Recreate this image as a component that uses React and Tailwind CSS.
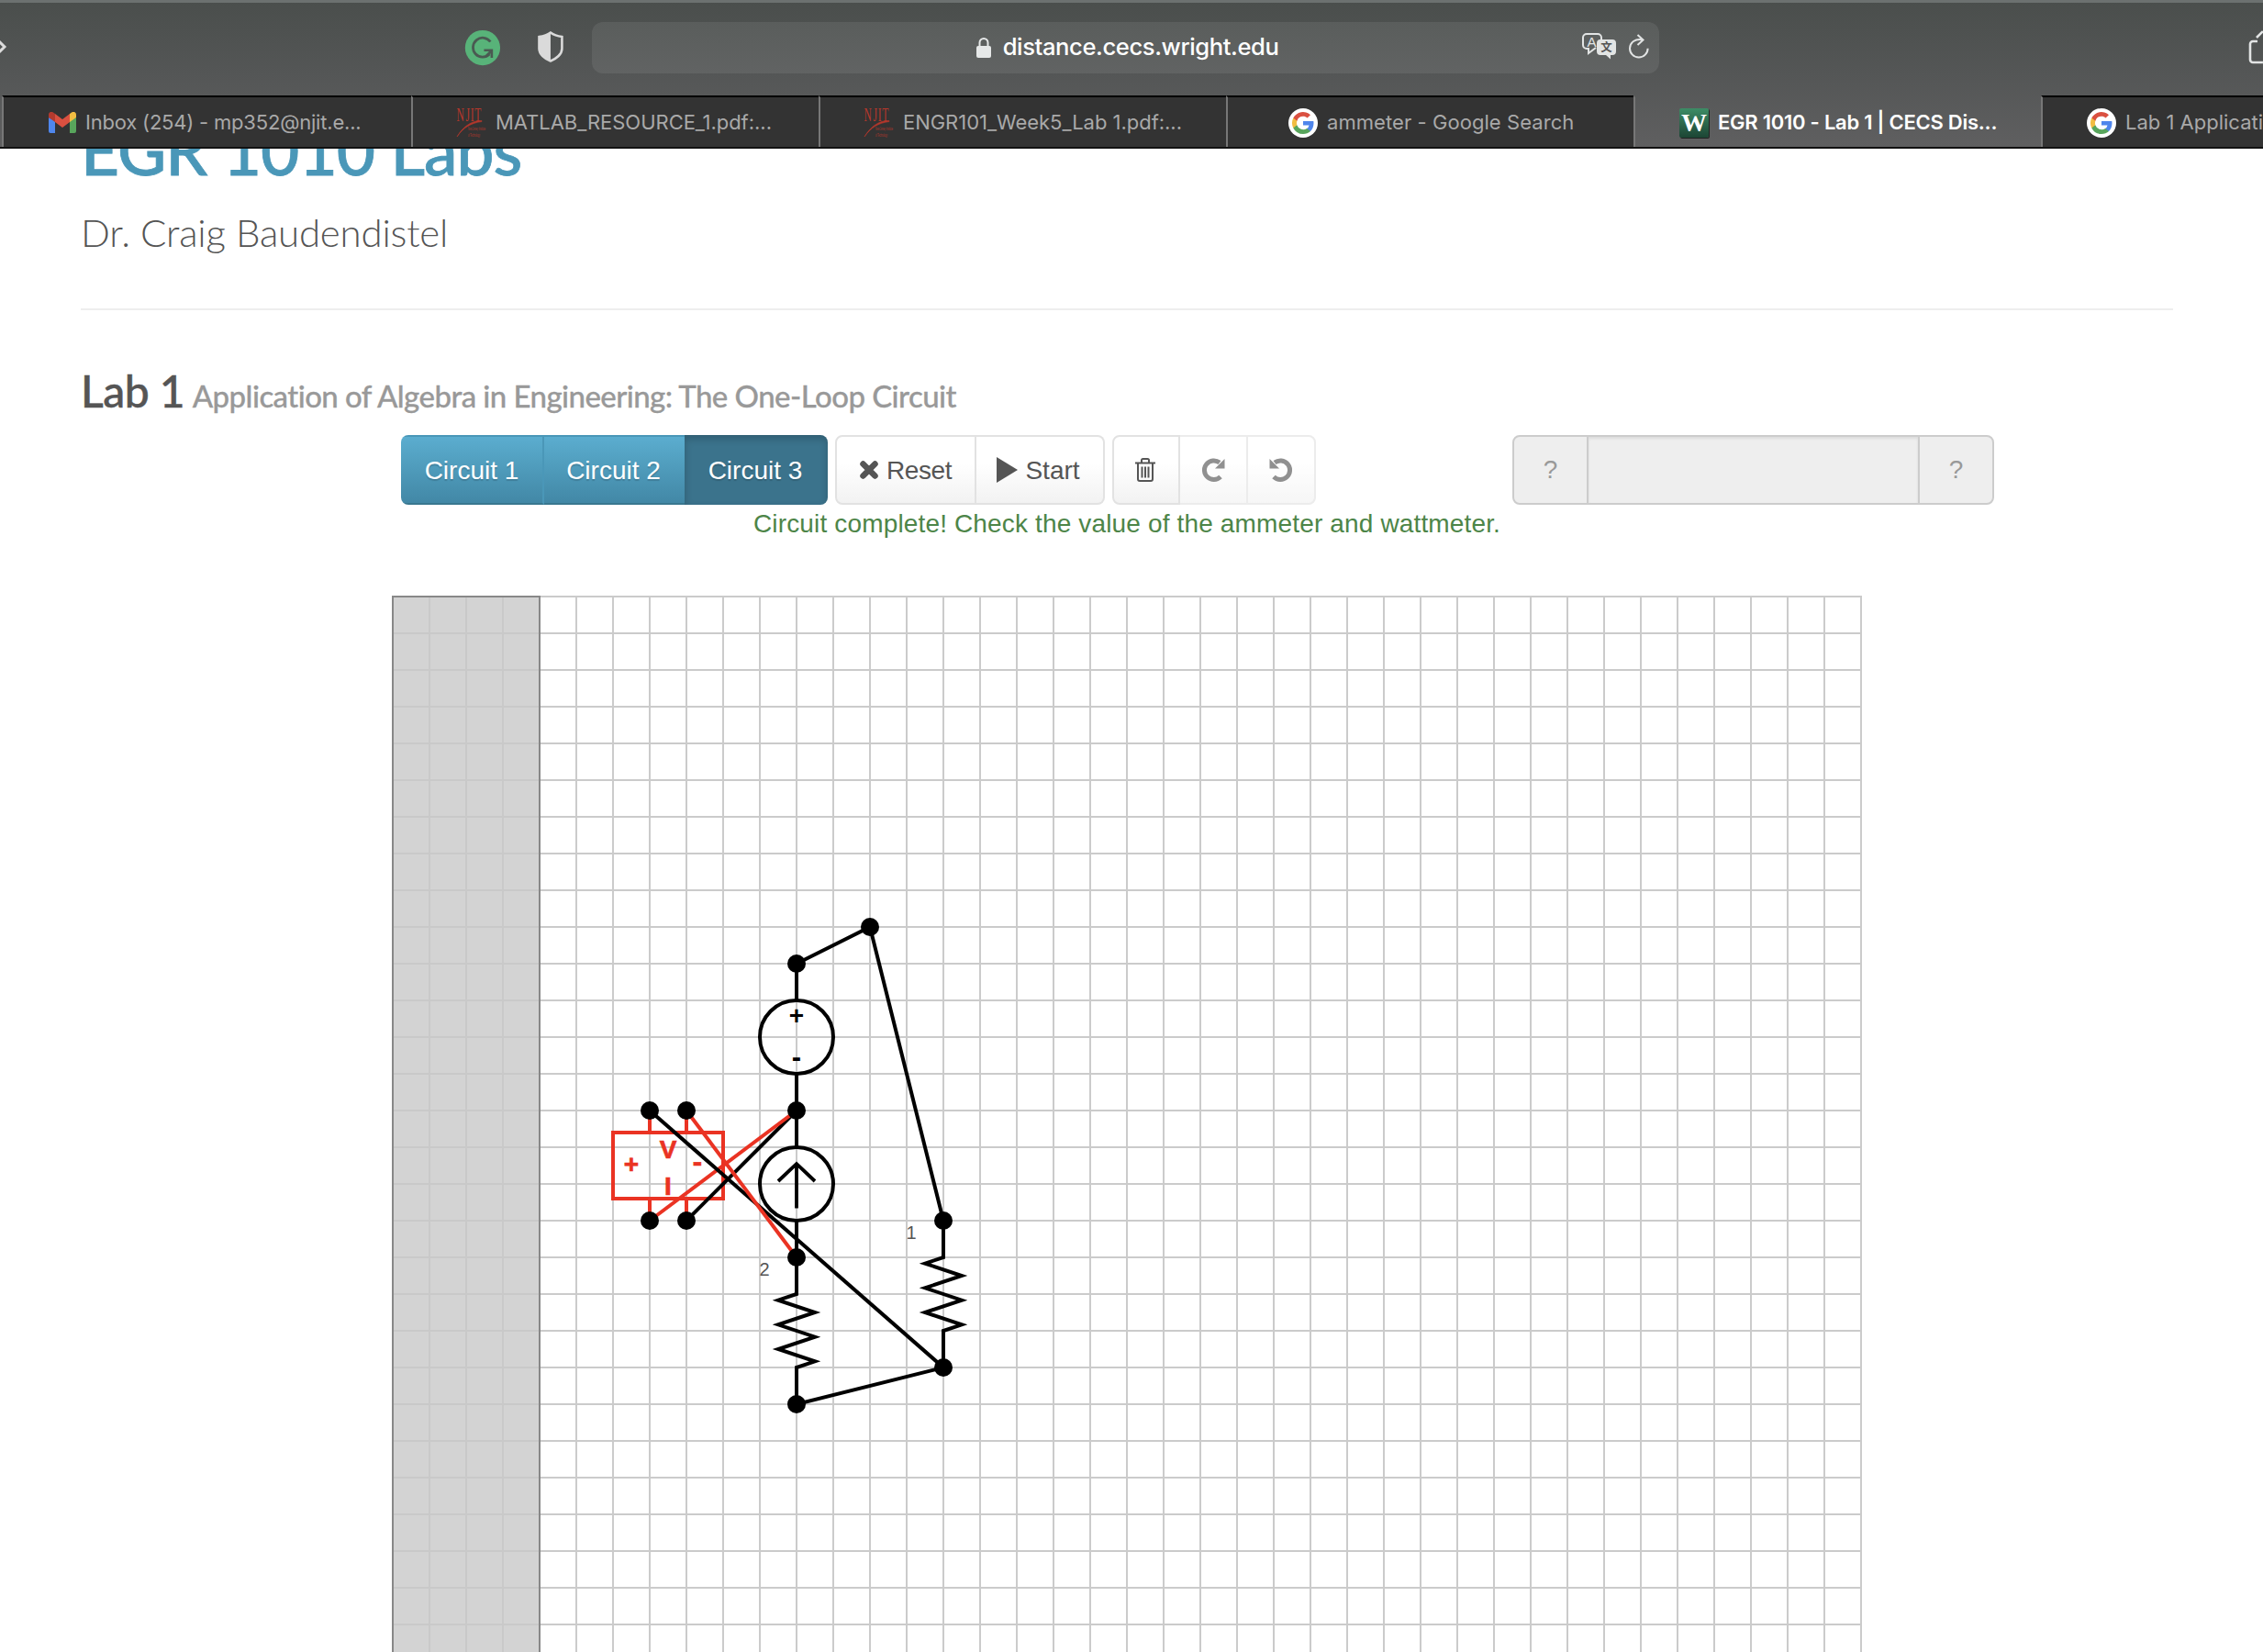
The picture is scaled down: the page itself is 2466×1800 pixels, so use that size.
import React from "react";

function GmailIcon() {
  return (
    <svg width="30" height="23" viewBox="0 0 30 23" className="shrink-0">
      <path d="M0 6v15a2 2 0 0 0 2 2h5V9z" fill="#4f86ec" />
      <path d="M30 6v15a2 2 0 0 1-2 2h-5V9z" fill="#58a55c" />
      <path d="M23 2v9l7-5V3c0-3-3-4-5-2.400z" fill="#f2bd42" />
      <path d="M7 2v9L0 6V3C0 0 3-1 5 .6z" fill="#b33a2e" />
      <path d="M7 2l8 6 8-6v9l-8 6-8-6z" fill="#da5040" />
    </svg>
  );
}

function NjitIcon() {
  return (
    <svg width="34" height="34" viewBox="0 0 34 34" className="shrink-0 font-['Liberation_Serif',serif]" fill="#b5372c">
      <text x="1 18 27 35" y="15" fontSize="20" transform="scale(.58 1)">NJIT</text>
      <path d="M28 14.500C18 14 8 20 1 32C8 22 16 17 28 15.500z" stroke="#b5372c" strokeWidth="0.600" />
      <g fontSize="4.500" className="font-['Liberation_Sans',sans-serif]">
        <text x="13" y="25" textLength="19" lengthAdjust="spacingAndGlyphs">New Jersey Institute</text>
        <text x="13" y="32" textLength="13" lengthAdjust="spacingAndGlyphs">of Technology</text>
      </g>
    </svg>
  );
}

function GoogleIcon() {
  return (
    <svg width="32" height="32" viewBox="0 0 32 32" className="shrink-0">
      <circle cx="16" cy="16" r="16" fill="#fff" />
      <g transform="translate(4 4)">
        <path fill="#4f86ec" d="M23.500 12.300c0-.8-.1-1.600-.2-2.300H12v4.500h6.500a5.500 5.500 0 0 1-2.400 3.600v3h3.900c2.200-2.100 3.500-5.200 3.500-8.800z" />
        <path fill="#58a55c" d="M12 24c3.200 0 6-1.100 8-2.900l-3.900-3a7.200 7.200 0 0 1-10.800-3.800h-4v3.100A12 12 0 0 0 12 24z" />
        <path fill="#f2bd42" d="M5.300 14.300a7.200 7.200 0 0 1 0-4.600V6.600h-4a12 12 0 0 0 0 10.800z" />
        <path fill="#da5040" d="M12 4.800c1.800 0 3.300.6 4.600 1.800L20 3.200A12 12 0 0 0 1.300 6.600l4 3.100A7.200 7.200 0 0 1 12 4.800z" />
      </g>
    </svg>
  );
}

function WIcon() {
  return (
    <div className="flex h-8 w-8 shrink-0 items-center justify-center rounded-xs bg-linear-to-b from-[#3d8d66] to-[#1c4534] font-['Liberation_Serif',serif] text-[28px] leading-none font-bold tracking-normal text-white shadow-[1px_1px_0_#222]">
      W
    </div>
  );
}

const tabs = [
  { icon: <GmailIcon />, label: "Inbox (254) - mp352@njit.e...", box: "w-[446px] pl-[49px] gap-[10px] tracking-[-0.200px]" },
  { icon: <NjitIcon />, label: "MATLAB_RESOURCE_1.pdf:...", box: "w-[444px] pl-[47px] gap-[9px] tracking-[-0.030px]" },
  { icon: <NjitIcon />, label: "ENGR101_Week5_Lab 1.pdf:...", box: "w-[444px] pl-[47px] gap-[9px] tracking-[-0.030px]" },
  { icon: <GoogleIcon />, label: "ammeter - Google Search", box: "w-[444px] pl-[66px] gap-[10px] tracking-[0.060px]" },
  { icon: <WIcon />, label: "EGR 1010 - Lab 1 | CECS Dis...", box: "w-[444px] pl-[48px] gap-[10px] tracking-[-0.250px]", active: true },
];

function Toolbar() {
  return (
    <div className="flex h-[104px] items-center border-t-3 border-[#6c7170] pb-[3px]">
      <svg width="10" height="24" viewBox="0 0 10 24" fill="none" stroke="#dcdcdc" strokeWidth="3" className="mt-[-3px]">
        <path d="M-4 3l9 9-9 9" />
      </svg>
      <svg width="40" height="40" viewBox="0 0 40 40" className="ml-[496px]">
        <circle cx="20" cy="20" r="19.200" fill="#58b379" />
        <path d="M28.500 13.500A10.500 10.500 0 1 0 27.500 27" fill="none" stroke="#4a5a52" strokeWidth="2.800" />
        <path d="M21.500 22.800h8.500v8.200M30 23l-6 6" fill="none" stroke="#4a5a52" strokeWidth="2.600" />
      </svg>
      <svg width="28" height="34" viewBox="0 0 28 34" className="mt-[-2px] ml-[40px]">
        <path d="M14 1.500C18 4.500 22 5.500 26.500 6v13c0 6-6 11-12.500 13.500C7.500 30 1.500 25 1.500 19V6C6 5.500 10 4.500 14 1.500z" fill="none" stroke="#dadada" strokeWidth="2.600" />
        <path d="M14 1.500v31C7.500 30 1.500 25 1.500 19V6C6 5.500 10 4.500 14 1.500z" fill="#dadada" />
      </svg>
      <div className="ml-[31px] flex h-14 w-[1168px] items-center rounded-xl bg-white/8">
        <svg width="16" height="24" viewBox="0 0 16 24" className="ml-[419px]">
          <path d="M3.500 11V6.500a4.500 4.500 0 0 1 9 0V11" fill="none" stroke="#e6e8e8" strokeWidth="2" />
          <rect x="0" y="10" width="16" height="13" rx="2" fill="#e6e8e8" />
        </svg>
        <span className="ml-[13px] w-[310px] pb-[2px] text-[25.600px] font-medium tracking-[-0.400px] whitespace-nowrap text-white">distance.cecs.wright.edu</span>
        <svg width="38" height="30" viewBox="0 0 38 30" className="mt-[-2px] ml-[321px] font-['Liberation_Sans','Noto_Sans_CJK_SC',sans-serif]">
          <path d="M15 16l-8 6v-5H5a4 4 0 0 1-4-4V5a4 4 0 0 1 4-4h12a4 4 0 0 1 4 4v2" fill="none" stroke="#e2e4e4" strokeWidth="2" />
          <text x="10.500" y="14.500" fontSize="15" textAnchor="middle" fill="#e2e4e4">A</text>
          <path d="M20 7h13a4 4 0 0 1 4 4v9a4 4 0 0 1-4 4h-2v4.500l-5-4.500h-6a4 4 0 0 1-4-4v-9a4 4 0 0 1 4-4z" fill="#e2e4e4" />
          <text x="26.500" y="20" fontSize="12.500" fontWeight="bold" textAnchor="middle" fill="#555">文</text>
        </svg>
        <svg width="24" height="28" viewBox="0 0 24 28" className="mt-[-2px] ml-[13px]" fill="none" stroke="#e2e4e4" strokeWidth="2">
          <path d="M15 6.300C7 4.500 1 9.500 1 15.700a9.800 9.800 0 0 0 19.600 0" />
          <path d="M9.500 1l6 5.500-6 5.500" />
        </svg>
      </div>
      <svg width="16" height="40" viewBox="0 0 16 40" className="mt-[-3px] ml-[642px]" fill="none" stroke="#e2e4e4" strokeWidth="2.600">
        <path d="M10 14H5a3 3 0 0 0-3 3v17a3 3 0 0 0 3 3h11M9 10l7-7" />
      </svg>
    </div>
  );
}

function Tabs() {
  return (
    <div className="flex h-[57px] pl-[2px] text-[22px]">
      {tabs.map((t, i) => (
        <div
          key={i}
          className={
            "flex shrink-0 items-center border-l-2 border-l-[#777] " + t.box +
            (t.active ? " border-t-2 border-t-transparent font-semibold text-white" : " border-t-2 border-t-black bg-[#333] text-[#a9a9a9]")
          }
        >
          {t.icon}
          <span className="whitespace-nowrap">{t.label}</span>
        </div>
      ))}
      <div className="flex flex-1 items-center gap-[10px] overflow-hidden border-t-2 border-l-2 border-t-black border-l-[#777] bg-[#333] pl-[48px] text-[#a9a9a9]">
        <GoogleIcon />
        <span className="whitespace-nowrap">Lab 1 Applicati</span>
      </div>
    </div>
  );
}

const btn = "flex items-center justify-center ";
const light = "bg-linear-to-b from-white from-40% to-[#f2f2f2] border-2 border-[#e2e2e2] text-[#555] ";
const blue = "bg-linear-to-b from-[#5badcf] to-[#4288a6] border-t-2 border-t-[#4a97b8] border-b-2 border-b-[#39778f] text-white ";

function Controls() {
  return (
    <div className="ml-[437px] flex h-[76px] text-[28px]">
      <div className="flex overflow-hidden rounded-lg [text-shadow:0_2px_1px_rgba(0,0,0,0.15)]">
        <div className={btn + blue + "w-[156px] border-r-2 border-r-[#4a97b8] pt-[2px]"}>Circuit 1</div>
        <div className={btn + blue + "w-[153px] pt-[2px] pr-[2px]"}>Circuit 2</div>
        <div className={btn + "w-[156px] bg-[#3b738c] pt-[2px] pr-[2px] text-white shadow-[inset_0_4px_8px_rgba(0,0,0,0.2)]"}>Circuit 3</div>
      </div>
      <div className="ml-[8px] flex">
        <div className={btn + light + "w-[154px] gap-[9px] rounded-l-lg"}>
          <svg width="20" height="20" viewBox="0 0 20 20" stroke="#555" strokeWidth="6.500" strokeLinecap="round"><path d="M3.500 3.500l13 13M16.500 3.500l-13 13" /></svg>
          <span className="pt-px tracking-[-0.400px]">Reset</span>
        </div>
        <div className={btn + light + "w-[140px] gap-[8px] rounded-r-lg border-l-0 pr-[3px]"}>
          <svg width="23" height="28" viewBox="0 0 23 28" fill="#555"><path d="M0 0l23 14L0 28z" /></svg>
          <span className="pt-px">Start</span>
        </div>
      </div>
      <div className="ml-[8px] flex">
        <div className={btn + light + "w-[74px] rounded-l-lg pr-[2px]"}>
          <svg width="22" height="26" viewBox="0 0 22 26" fill="none" stroke="#555" strokeWidth="2">
            <path d="M0 5.500h22M7 5V2.500Q7 1 8.500 1h5Q15 1 15 2.500V5M3 6v17q0 2 2 2h12q2 0 2-2V6M7.500 9.500v12M11 9.500v12M14.500 9.500v12" />
          </svg>
        </div>
        <div className={btn + light + "w-[72px] border-x-0 opacity-65"}>
          <svg width="25" height="28" viewBox="0 0 25 26" fill="none" stroke="#555" strokeWidth="5">
            <path d="M20 20.500A10.300 10.300 0 1 1 19 5" />
            <path d="M24.500 1v10.500H14z" fill="#555" stroke="none" />
          </svg>
        </div>
        <div className={btn + light + "w-[76px] rounded-r-lg pr-[1px] opacity-65"}>
          <svg width="25" height="28" viewBox="0 0 25 26" fill="none" stroke="#555" strokeWidth="5">
            <path d="M5 20.500A10.300 10.300 0 1 0 6 5" />
            <path d="M.5 1v10.500H11z" fill="#555" stroke="none" />
          </svg>
        </div>
      </div>
      <div className="ml-[214px] flex w-[525px] rounded-lg border-2 border-[#ccc] bg-[#eee] text-[#999]">
        <div className="flex w-[81px] items-center justify-center border-r-2 border-[#ccc]">?</div>
        <div className="flex-1 shadow-[inset_0_2px_3px_rgba(0,0,0,0.08)]" />
        <div className="flex w-[81px] items-center justify-center border-l-2 border-[#ccc]">?</div>
      </div>
    </div>
  );
}

const verticals = Array.from({ length: 41 }, (_, i) => 428 + i * 40);
const horizontals = Array.from({ length: 29 }, (_, i) => 650 + i * 40);
const nodes = [[948, 1010], [868, 1050], [868, 1210], [708, 1210], [748, 1210], [708, 1330], [748, 1330], [868, 1370], [868, 1530], [1028, 1330], [1028, 1490]];
const zig = "l-20 6.667l40 13.333l-40 13.333l40 13.333l-40 13.333l40 13.333l-20 6.667";

/* The drawing board and the circuit that is placed on it. */
function Board() {
  return (
    <svg width="1610" height="1151" viewBox="427 649 1610 1151" className="ml-[427px] block shrink-0 font-['Liberation_Sans',sans-serif]">
      <g stroke="#cbcbcb" strokeWidth="2">
        {verticals.map((x) => <path key={x} d={`M${x} 649V1800`} />)}
        {horizontals.map((y) => <path key={y} d={`M427 ${y}H2029`} />)}
      </g>
      <rect x="428" y="650" width="160" height="1200" fill="#d3d3d3" />
      <g stroke="#c9c9c9" strokeWidth="2">
        {verticals.slice(1, 4).map((x) => <path key={x} d={`M${x} 650V1800`} />)}
        {horizontals.slice(1).map((y) => <path key={y} d={`M428 ${y}H588`} />)}
      </g>
      <rect x="428" y="650" width="160" height="1200" fill="none" stroke="#888" strokeWidth="2" />
      <g fill="none" stroke="#000" strokeWidth="4" strokeMiterlimit="10">
        <path d={`M868 1050V1090M868 1170V1250M868 1330V1410${zig}V1530`} />
        <path d={`M1028 1330V1370${zig}V1490`} />
        <circle cx="868" cy="1130" r="40" />
        <circle cx="868" cy="1290" r="40" />
        <path d="M868 1316.500V1268M848 1287l20-19 20 19" strokeWidth="3.800" />
      </g>
      <g fill="none" stroke="#ea3323" strokeWidth="4">
        <rect x="668" y="1234" width="120" height="72" />
        <path d="M708 1210v24M748 1210v24M708 1306v24M748 1306v24" />
      </g>
      <g strokeWidth="4">
        <path d="M868 1050L948 1010L1028 1330M868 1530L1028 1490" fill="none" stroke="#000" />
        <path d="M868 1210L748 1330" stroke="#000" />
        <path d="M708 1330L868 1210" stroke="#ea3323" />
        <path d="M708 1210L1028 1490" stroke="#000" />
        <path d="M748 1210L868 1370" stroke="#ea3323" />
      </g>
      {nodes.map(([x, y], i) => <circle key={i} cx={x} cy={y} r="10" />)}
      <g fontSize="28" fontWeight="bold" textAnchor="middle">
        <text x="868" y="1116">+</text>
        <text x="868" y="1162" fontSize="31">-</text>
        <g fill="#ea3323" stroke="#ea3323" strokeWidth="0.700">
          <text x="688" y="1278">+</text>
          <text x="760" y="1276" fontSize="31">-</text>
          <text x="728" y="1261.500">V</text>
          <text x="728" y="1301.500">I</text>
        </g>
      </g>
      <g fontSize="20" fill="#555" textAnchor="middle">
        <text x="993" y="1350">1</text>
        <text x="833" y="1390">2</text>
      </g>
    </svg>
  );
}

export default function App() {
  return (
    <div className="flex h-[1800px] w-[2466px] flex-col overflow-hidden bg-white font-['Liberation_Sans',sans-serif] text-[#555]">
      <header className="h-[162px] shrink-0 overflow-hidden border-b-2 border-[#111] bg-linear-to-b from-[#4a4e4c] via-[#545656] via-50% to-[#5f5f60] font-['Inter',sans-serif]">
        <Toolbar />
        <Tabs />
      </header>
      <div className="flex h-[487px] shrink-0 flex-col overflow-hidden font-['Lato',sans-serif]">
        <h1 className="mt-[-39px] ml-[88px] h-[88px] shrink-0 text-[73px] leading-[80px] font-medium tracking-[-1px] whitespace-nowrap text-[#4a97b8] [-webkit-text-stroke:0.8px_#4a97b8]">EGR 1010 Labs</h1>
        <h2 className="ml-[88px] h-[87px] shrink-0 text-[42px] leading-[84px] font-light tracking-[-0.200px] whitespace-nowrap text-[#555]">Dr. Craig Baudendistel</h2>
        <hr className="mt-[38px] ml-[88px] w-[2280px] shrink-0 border-t-2 border-[#eee]" />
        <h3 className="mt-[53px] ml-[88px] h-[83px] shrink-0 text-[48px] leading-[70px] font-medium tracking-[-0.500px] whitespace-nowrap text-[#555] [-webkit-text-stroke:0.5px_#555]">
          Lab 1 <small className="-ml-[3px] text-[33px] tracking-[-0.570px] text-[#999] [-webkit-text-stroke:0.3px_#999]">Application of Algebra in Engineering: The One-Loop Circuit</small>
        </h3>
        <div className="font-['Liberation_Sans',sans-serif]">
          <Controls />
          <p className="ml-[821px] pt-px text-[28px] leading-10 tracking-[0.150px] whitespace-nowrap text-[#4d8548]">Circuit complete! Check the value of the ammeter and wattmeter.</p>
        </div>
      </div>
      <Board />
    </div>
  );
}
